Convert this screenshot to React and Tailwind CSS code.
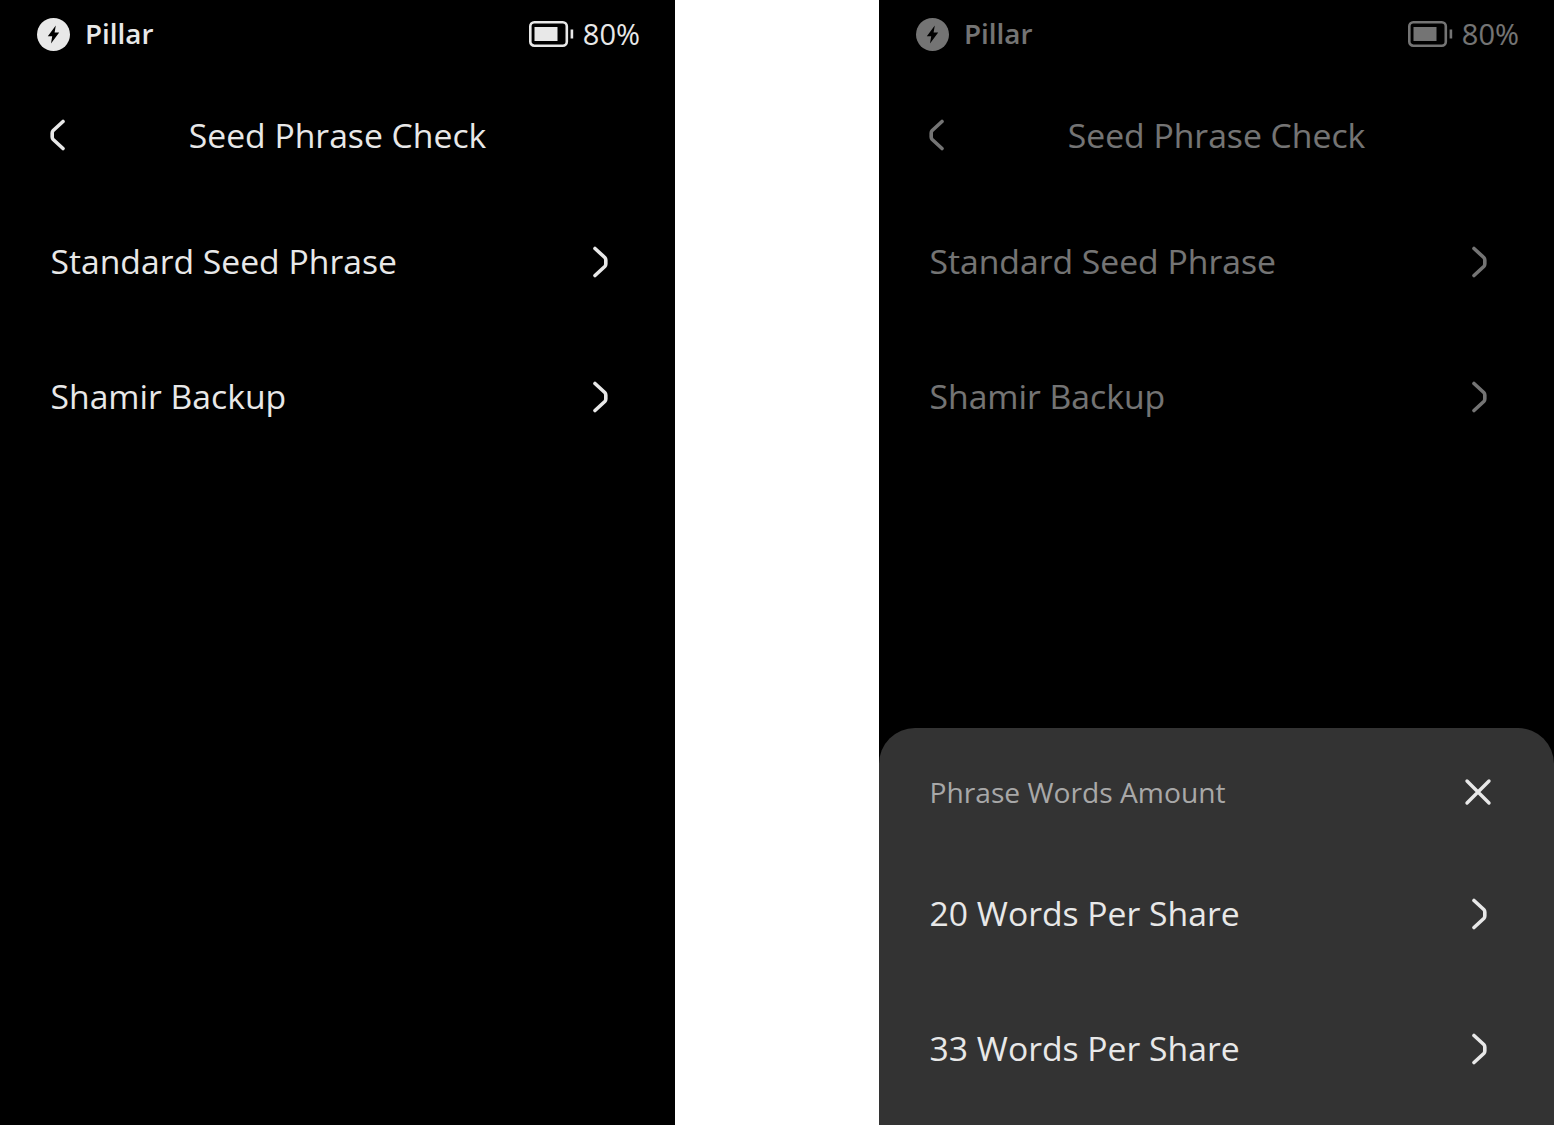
function Chevron({ left = false, className = "" }) {
  return (
    <svg width="16" height="32" viewBox="0 0 16 32" fill="none" className={className}>
      <path
        d={left ? "M13 2.5 L3.2 11.5 Q2.2 12.5 2.2 14 V18 Q2.2 19.5 3.2 20.5 L13 29.5" : "M3 2.5 L12.8 11.5 Q13.8 12.5 13.8 14 V18 Q13.8 19.5 12.8 20.5 L3 29.5"}
        stroke="currentColor"
        strokeWidth="3.6"
        strokeLinecap="round"
        strokeLinejoin="round"
      />
    </svg>
  );
}

function Bolt() {
  return (
    <svg width="33" height="33" viewBox="0 0 33 33">
      <circle cx="16.5" cy="16.5" r="16.5" fill="currentColor" />
      <path d="M18.8 7.4 L10.8 18.3 H15.2 L14 25.6 L22.2 14.6 H17.6 Z" fill="#000" />
    </svg>
  );
}

function Battery() {
  return (
    <svg width="46" height="26" viewBox="0 0 46 26" fill="none">
      <rect x="2.3" y="1.3" width="36.5" height="23.4" rx="4" stroke="currentColor" strokeWidth="2.6" />
      <rect x="6.5" y="6" width="23" height="14" fill="currentColor" />
      <rect x="42.6" y="8.5" width="2.6" height="9" fill="currentColor" />
    </svg>
  );
}

function Row({ label }) {
  return (
    <div className="h-[135px] flex items-center justify-between pl-[50.5px] pr-[67px] text-[33.7px]">
      <span>{label}</span>
      <Chevron />
    </div>
  );
}

function Screen() {
  return (
    <>
      <div className="h-[68px] flex items-center justify-between pl-[37px] pr-[35px]">
        <div className="flex items-center gap-[15px]">
          <Bolt />
          <span className="text-[27.8px] font-semibold">Pillar</span>
        </div>
        <div className="flex items-center gap-[9px]">
          <Battery />
          <span className="text-[29px]">80%</span>
        </div>
      </div>
      <div className="h-[126px] pt-[8px] relative flex items-center justify-center text-[33.7px]">
        <Chevron left className="absolute left-[50px] top-[51px]" />
        <span>Seed Phrase Check</span>
      </div>
      <div>
        <Row label="Standard Seed Phrase" />
        <Row label="Shamir Backup" />
      </div>
    </>
  );
}

export default function App() {
  return (
    <div
      className="w-[1554px] h-[1125px] bg-white flex justify-between overflow-hidden"
      style={{ fontFamily: '"Open Sans", sans-serif' }}
    >
      <div className="w-[675px] h-full bg-black text-[#e8e8e8]">
        <Screen />
      </div>
      <div className="w-[675px] h-full bg-black text-[#e8e8e8] relative overflow-hidden">
        <div className="opacity-50">
          <Screen />
        </div>
        <div className="absolute left-0 right-0 bottom-0 h-[397px] bg-[#333333] rounded-t-[36px]">
          <div className="h-[118px] pt-[10px] flex items-center justify-between pl-[50.5px] pr-[61px]">
            <span className="text-[28.2px] text-[#a8a8a8]">Phrase Words Amount</span>
            <svg width="30" height="30" viewBox="0 0 30 30" fill="none">
              <path d="M4 4 L26 26 M26 4 L4 26" stroke="currentColor" strokeWidth="3.4" strokeLinecap="round" />
            </svg>
          </div>
          <Row label="20 Words Per Share" />
          <Row label="33 Words Per Share" />
        </div>
      </div>
    </div>
  );
}
